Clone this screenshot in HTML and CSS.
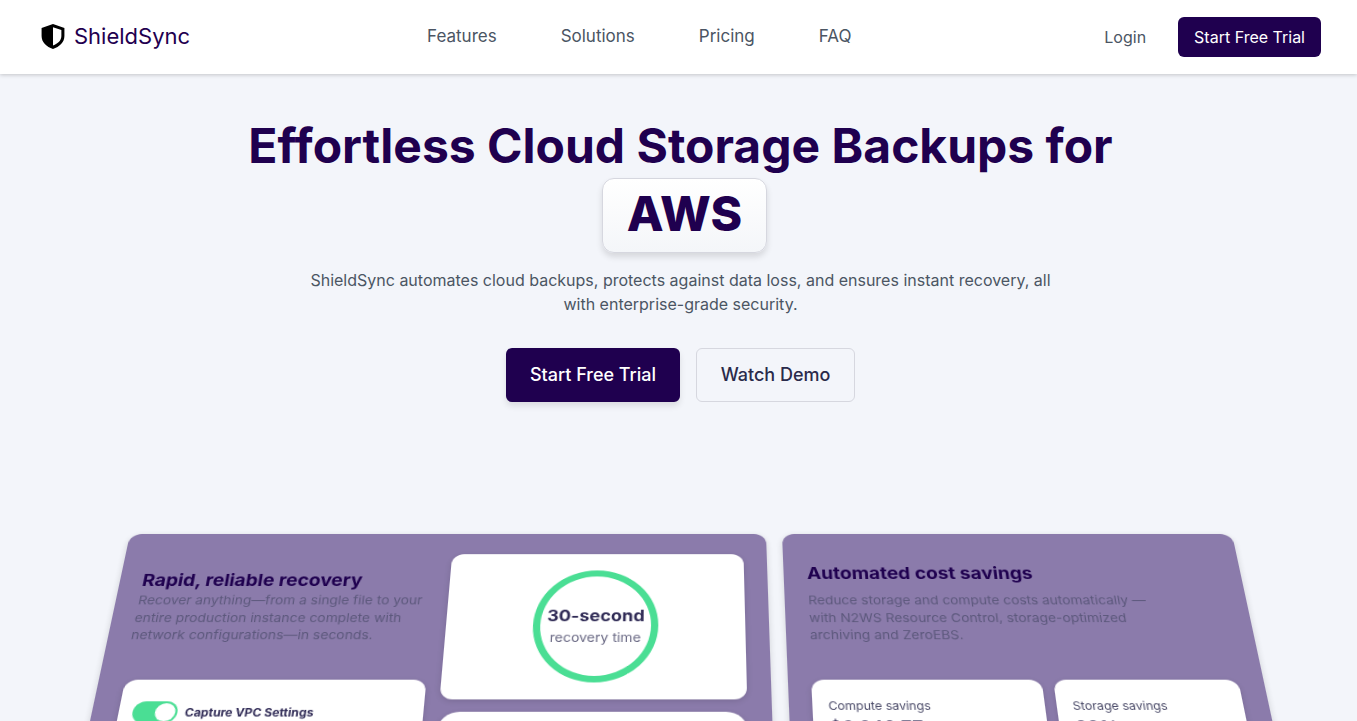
FILE: index.html
```html
<!DOCTYPE html>
<html lang="en">
<head>
    <meta charset="UTF-8">
    <meta name="viewport" content="width=device-width, initial-scale=1.0">
    <title>ShieldSync</title>
    <link rel="stylesheet" href="styles.css">
</head>
<body>
    <header class="navbar">
        <a class="brand" href="#">
            <svg class="brand-icon" viewBox="1.500 1 21 23" width="24" height="25">
                <path fill="#000" fill-rule="evenodd" d="M12 1 L22.5 4.6 V12 C22.5 18 18 21.8 12 24 C6 21.8 1.500 18 1.500 12 V4.600 Z M12 4 V20.800 C16.600 18.900 19.700 16 19.700 12 V6.600 Z"/>
            </svg>
            <span>ShieldSync</span>
        </a>
        <nav class="nav-links">
            <a href="#">Features</a>
            <a href="#">Solutions</a>
            <a href="#">Pricing</a>
            <a href="#">FAQ</a>
        </nav>
        <div class="nav-actions">
            <a class="login" href="#">Login</a>
            <button class="btn-small">Start Free Trial</button>
        </div>
    </header>

    <section class="hero">
        <h1>Effortless Cloud Storage Backups for</h1>
        <div class="word-chip">AWS</div>
        <p>ShieldSync automates cloud backups, protects against data loss, and ensures instant recovery, all with enterprise-grade security.</p>
        <div class="hero-buttons">
            <button class="btn-primary">Start Free Trial</button>
            <button class="btn-outline">Watch Demo</button>
        </div>
    </section>

    <section class="stage">
        <div class="tilt">
            <div class="panel panel-left">
                <div class="panel-col">
                    <div class="panel-text text-left">
                        <h3>Rapid, reliable recovery</h3>
                        <p>Recover anything—from a single file to your entire production instance complete with network configurations—in seconds.</p>
                    </div>
                    <div class="card settings-card">
                        <div class="toggle-row">
                            <span class="toggle"></span>
                            <span class="toggle-label">Capture VPC Settings</span>
                        </div>
                    </div>
                </div>
                <div class="panel-col">
                    <div class="card ring-card">
                        <div class="ring">
                            <strong>30-second</strong>
                            <span>recovery time</span>
                        </div>
                    </div>
                    <div class="card lower-card"></div>
                </div>
            </div>
            <div class="panel panel-right">
                <div class="panel-text">
                    <h3>Automated cost savings</h3>
                    <p>Reduce storage and compute costs automatically — with N2WS Resource Control, storage-optimized archiving and ZeroEBS.</p>
                </div>
                <div class="savings">
                    <div class="card saving-card">
                        <span>Compute savings</span>
                        <strong>$6,240.77</strong>
                    </div>
                    <div class="card saving-card">
                        <span>Storage savings</span>
                        <strong>38%</strong>
                    </div>
                </div>
            </div>
        </div>
    </section>
</body>
</html>
```

FILE: styles.css
```css
* {
    box-sizing: border-box;
}

html, body {
    height: 721px;
    overflow: hidden;
}

body {
    margin: 0;
    font-family: Inter, "Liberation Sans", sans-serif;
    background-color: #f3f5fa;
    color: #1f004f;
}

a {
    text-decoration: none;
}

button {
    font-family: inherit;
    cursor: pointer;
}

.navbar {
    height: 74px;
    padding: 0 36px 0 41px;
    display: flex;
    justify-content: space-between;
    align-items: center;
    background-color: white;
    box-shadow: 0px 1px 4px rgba(0, 0, 0, 0.2);
}

.brand {
    display: flex;
    align-items: center;
    gap: 9px;
    margin-bottom: 2px;
    font-size: 22px;
    color: #1f004f;
}

.nav-links {
    display: flex;
    gap: 64px;
    margin-bottom: 2px;
    margin-right: 16px;
}

.nav-links a {
    font-size: 17px;
    color: #4b5563;
}

.nav-actions {
    display: flex;
    justify-content: flex-end;
    align-items: center;
    gap: 32px;
}

.login {
    font-size: 16px;
    color: #4b5563;
}

.btn-small {
    height: 40px;
    padding: 0 16px;
    font-size: 16px;
    color: white;
    background-color: #1f004f;
    border: none;
    border-radius: 6px;
}

.hero {
    display: flex;
    flex-direction: column;
    align-items: center;
    padding-left: 4px;
    text-align: center;
}

.hero h1 {
    margin: 42px 0 0;
    font-size: 48px;
    line-height: 60px;
    font-weight: 700;
}

.word-chip {
    width: 165px;
    height: 75px;
    margin-top: 2px;
    margin-left: 8px;
    font-size: 48px;
    font-weight: 800;
    line-height: 70px;
    background: linear-gradient(#ffffff, #f4f6f9);
    border: 1px solid #d6d7df;
    border-radius: 12px;
    box-shadow: 0px 4px 6px rgba(0, 0, 0, 0.12);
}

.hero p {
    width: 760px;
    margin: 15px 0 0;
    font-size: 16px;
    line-height: 24px;
    color: #4b5563;
}

.hero-buttons {
    display: flex;
    gap: 16px;
    margin-top: 32px;
}

.btn-primary {
    width: 174px;
    height: 54px;
    padding-bottom: 2px;
    font-size: 18px;
    font-weight: 500;
    color: white;
    background-color: #1f004f;
    border: none;
    border-radius: 6px;
    box-shadow: 0px 4px 6px rgba(0, 0, 0, 0.1);
}

.btn-outline {
    width: 159px;
    height: 54px;
    padding-bottom: 2px;
    font-size: 18px;
    font-weight: 500;
    color: #2a2a4a;
    background-color: transparent;
    border: 1px solid #d6d7df;
    border-radius: 6px;
}

.stage {
    margin-top: 132px;
    padding-left: 4px;
    display: flex;
    justify-content: center;
    perspective: 1050px;
    perspective-origin: 50% 50%;
}

.tilt {
    width: 1102px;
    display: grid;
    grid-template-columns: 636px 1fr;
    gap: 16px;
    transform: rotateX(20deg);
    transform-origin: 50% 0;
}

.panel {
    height: 640px;
    background-color: #8b7bab;
    border-radius: 12px;
    box-shadow: 0px 2px 6px rgba(0, 0, 0, 0.15);
}

.panel-left {
    padding: 24px 23px 24px 25px;
    display: grid;
    grid-template-columns: 285px 1fr;
    gap: 14px;
}

.panel-col {
    display: flex;
    flex-direction: column;
    gap: 13px;
}

.panel-text h3 {
    margin: 0;
    font-size: 18.8px;
    font-weight: 700;
    color: #1f004f;
}

.panel-text p {
    margin: 2px 0 0;
    font-size: 13.4px;
    line-height: 19.5px;
    color: #5c587c;
}

.text-left {
    padding: 19px 0 0;
    margin-left: -3px;
    height: 128px;
    white-space: nowrap;
}

.text-left p {
    white-space: normal;
    width: 310px;
}

.panel-right {
    padding: 35px 21px 24px 22px;
}

.panel-right .panel-text {
    padding-left: 1px;
    height: 130px;
}

.panel-right .panel-text p {
    max-width: 350px;
    margin-top: 10px;
}

.card {
    background-color: white;
    border-radius: 12px;
    box-shadow: 0px 2px 6px rgba(0, 0, 0, 0.12);
}

.settings-card {
    padding: 23px 13px;
    height: 200px;
}

.toggle-row {
    display: flex;
    align-items: center;
    gap: 7px;
}

.toggle {
    position: relative;
    width: 42px;
    height: 23px;
    border-radius: 12px;
    background-color: #4ade94;
}

.toggle::after {
    content: "";
    position: absolute;
    top: 2px;
    right: 2px;
    width: 19px;
    height: 19px;
    border-radius: 50%;
    background-color: white;
}

.toggle-label {
    font-size: 11.4px;
    font-weight: 700;
    color: #2f2a55;
}

.ring-card {
    height: 162px;
    display: flex;
    align-items: center;
    justify-content: center;
}

.ring {
    width: 121px;
    height: 125px;
    border: 7px solid #4ade94;
    border-radius: 50%;
    display: flex;
    flex-direction: column;
    align-items: center;
    justify-content: center;
}

.ring strong {
    font-size: 17.5px;
    white-space: nowrap;
    color: #2f2a55;
}

.ring span {
    margin-top: 6px;
    font-size: 13.5px;
    white-space: nowrap;
    color: #6b6a85;
}

.lower-card {
    height: 200px;
    border-radius: 20px;
}

.savings {
    display: grid;
    grid-template-columns: 218px 175px;
    gap: 11px;
}

.saving-card {
    height: 170px;
    padding: 21px 15px;
}

.saving-card span {
    display: block;
    font-size: 11.7px;
    color: #4a4a68;
}

.saving-card strong {
    display: block;
    margin-top: 5px;
    font-size: 18px;
    font-weight: 500;
    color: #2f2a55;
}
```
